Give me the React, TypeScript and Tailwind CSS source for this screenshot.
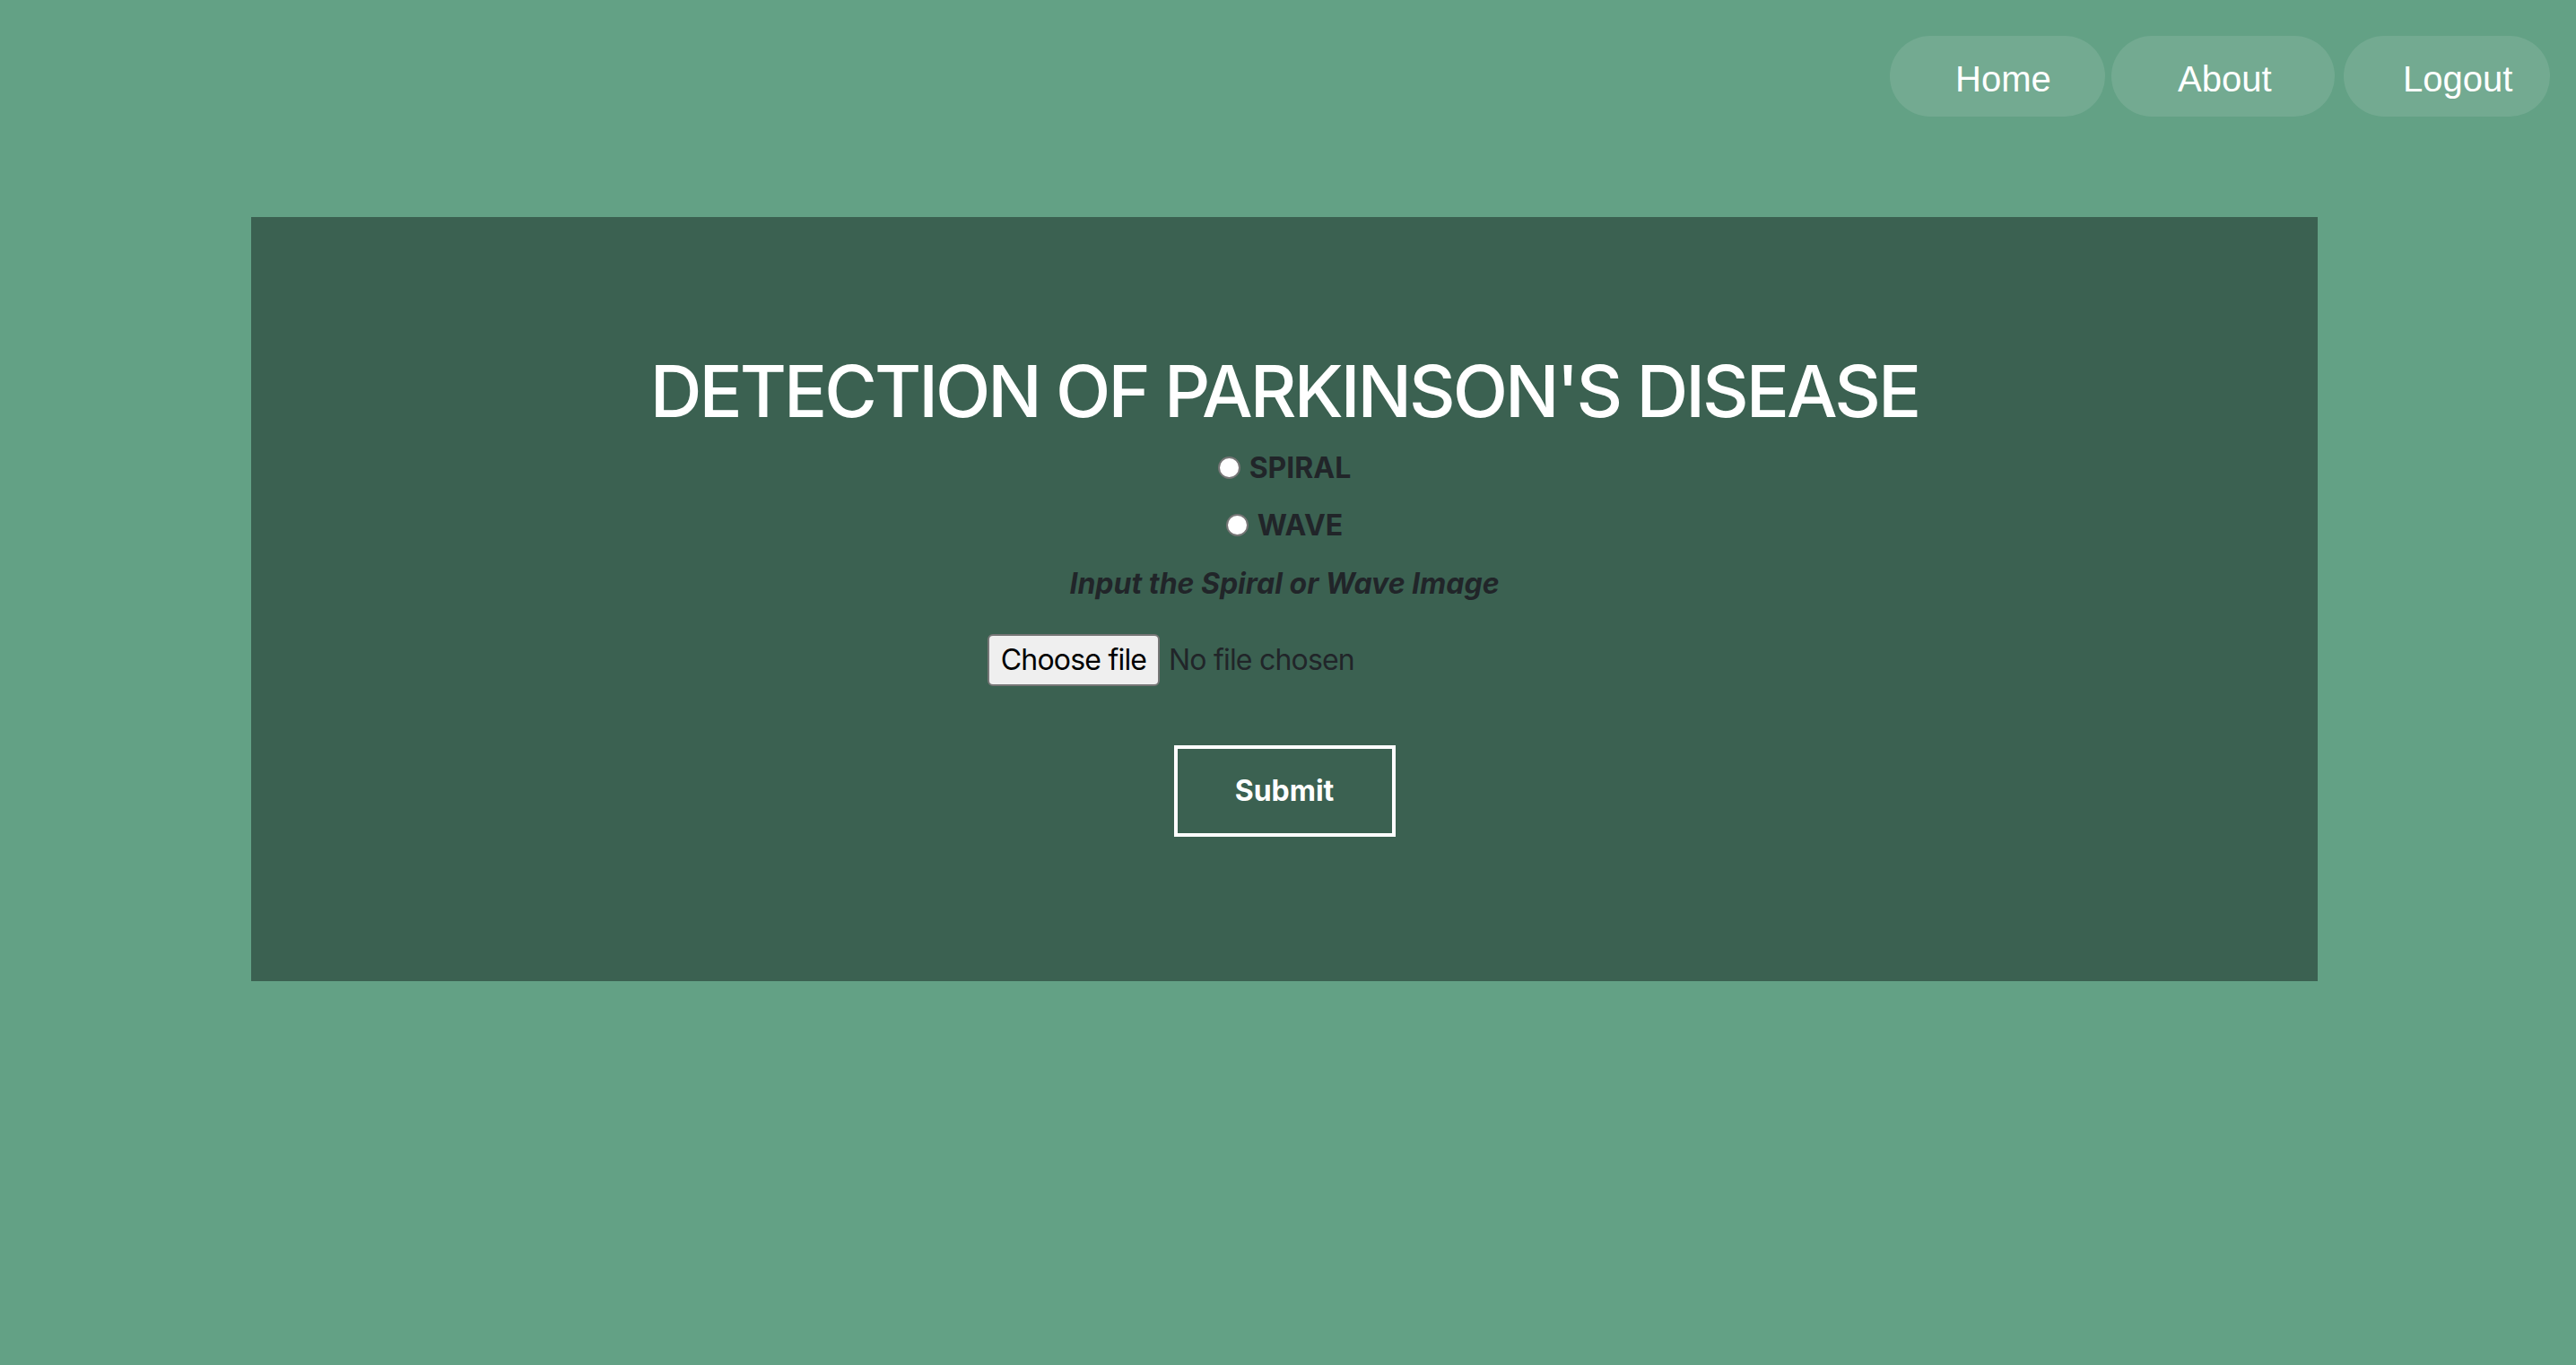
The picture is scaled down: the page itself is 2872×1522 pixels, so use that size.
import React from "react";

export default function App() {
  return (
    <div
      className="min-h-[1522px] w-full bg-[#63a185] overflow-hidden"
      style={{ fontFamily: "Inter, 'Noto Sans', sans-serif" }}
    >
      <nav className="flex justify-end pt-[40px] pr-[29px]">
        <a
          href="#"
          className="flex h-[90px] w-[240px] items-center rounded-full bg-[#73aa91] pl-[73px] pt-[6px] text-[40px] text-white no-underline"
          style={{ fontFamily: "'Liberation Sans', Arial, sans-serif" }}
        >
          Home
        </a>
        <a
          href="#"
          className="ml-[7px] flex h-[90px] w-[249px] items-center rounded-full bg-[#73aa91] pl-[74px] pt-[6px] text-[40px] text-white no-underline"
          style={{ fontFamily: "'Liberation Sans', Arial, sans-serif" }}
        >
          About
        </a>
        <a
          href="#"
          className="ml-[10px] flex h-[90px] w-[230px] items-center rounded-full bg-[#73aa91] pl-[66px] pt-[6px] text-[40px] text-white no-underline"
          style={{ fontFamily: "'Liberation Sans', Arial, sans-serif" }}
        >
          Logout
        </a>
      </nav>

      <main className="ml-[280px] mt-[112px] flex h-[852px] w-[2304px] flex-col items-center bg-[#3b6151] pt-[146px]">
        <h1 className="m-0 text-[80px] font-medium leading-[96px] tracking-[-3px] text-white">
          DETECTION OF PARKINSON'S DISEASE
        </h1>

        <label className="mt-[14px] flex h-[48px] items-center text-[32px] font-bold leading-[48px] text-[#212529]">
          <span className="mr-[10px] mt-[-2px] box-border h-[25px] w-[25px] rounded-full border-2 border-[#767676] bg-white" />
          SPIRAL
        </label>

        <label className="mt-[16px] flex h-[48px] items-center text-[32px] font-bold leading-[48px] text-[#212529]">
          <span className="mr-[10px] mt-[-2px] box-border h-[25px] w-[25px] rounded-full border-2 border-[#767676] bg-white" />
          WAVE
        </label>

        <p className="m-0 mt-[17px] h-[48px] text-[32px] font-bold italic leading-[48px] text-[#212529]">
          Input the Spiral or Wave Image
        </p>

        <div className="mt-[32px] flex w-[662px] items-center">
          <div className="box-border flex h-[58px] w-[192px] items-center justify-center rounded-[6px] border-2 border-[#767676] bg-[#efefef] text-[32px] tracking-[-0.8px] text-black">
            Choose file
          </div>
          <span className="ml-[10px] text-[32px] tracking-[-0.8px] text-[#212529]">No file chosen</span>
        </div>

        <button className="mt-[66px] box-border flex h-[102px] w-[247px] items-center justify-center border-4 border-white bg-transparent text-[32px] font-bold text-white">
          Submit
        </button>
      </main>
    </div>
  );
}
